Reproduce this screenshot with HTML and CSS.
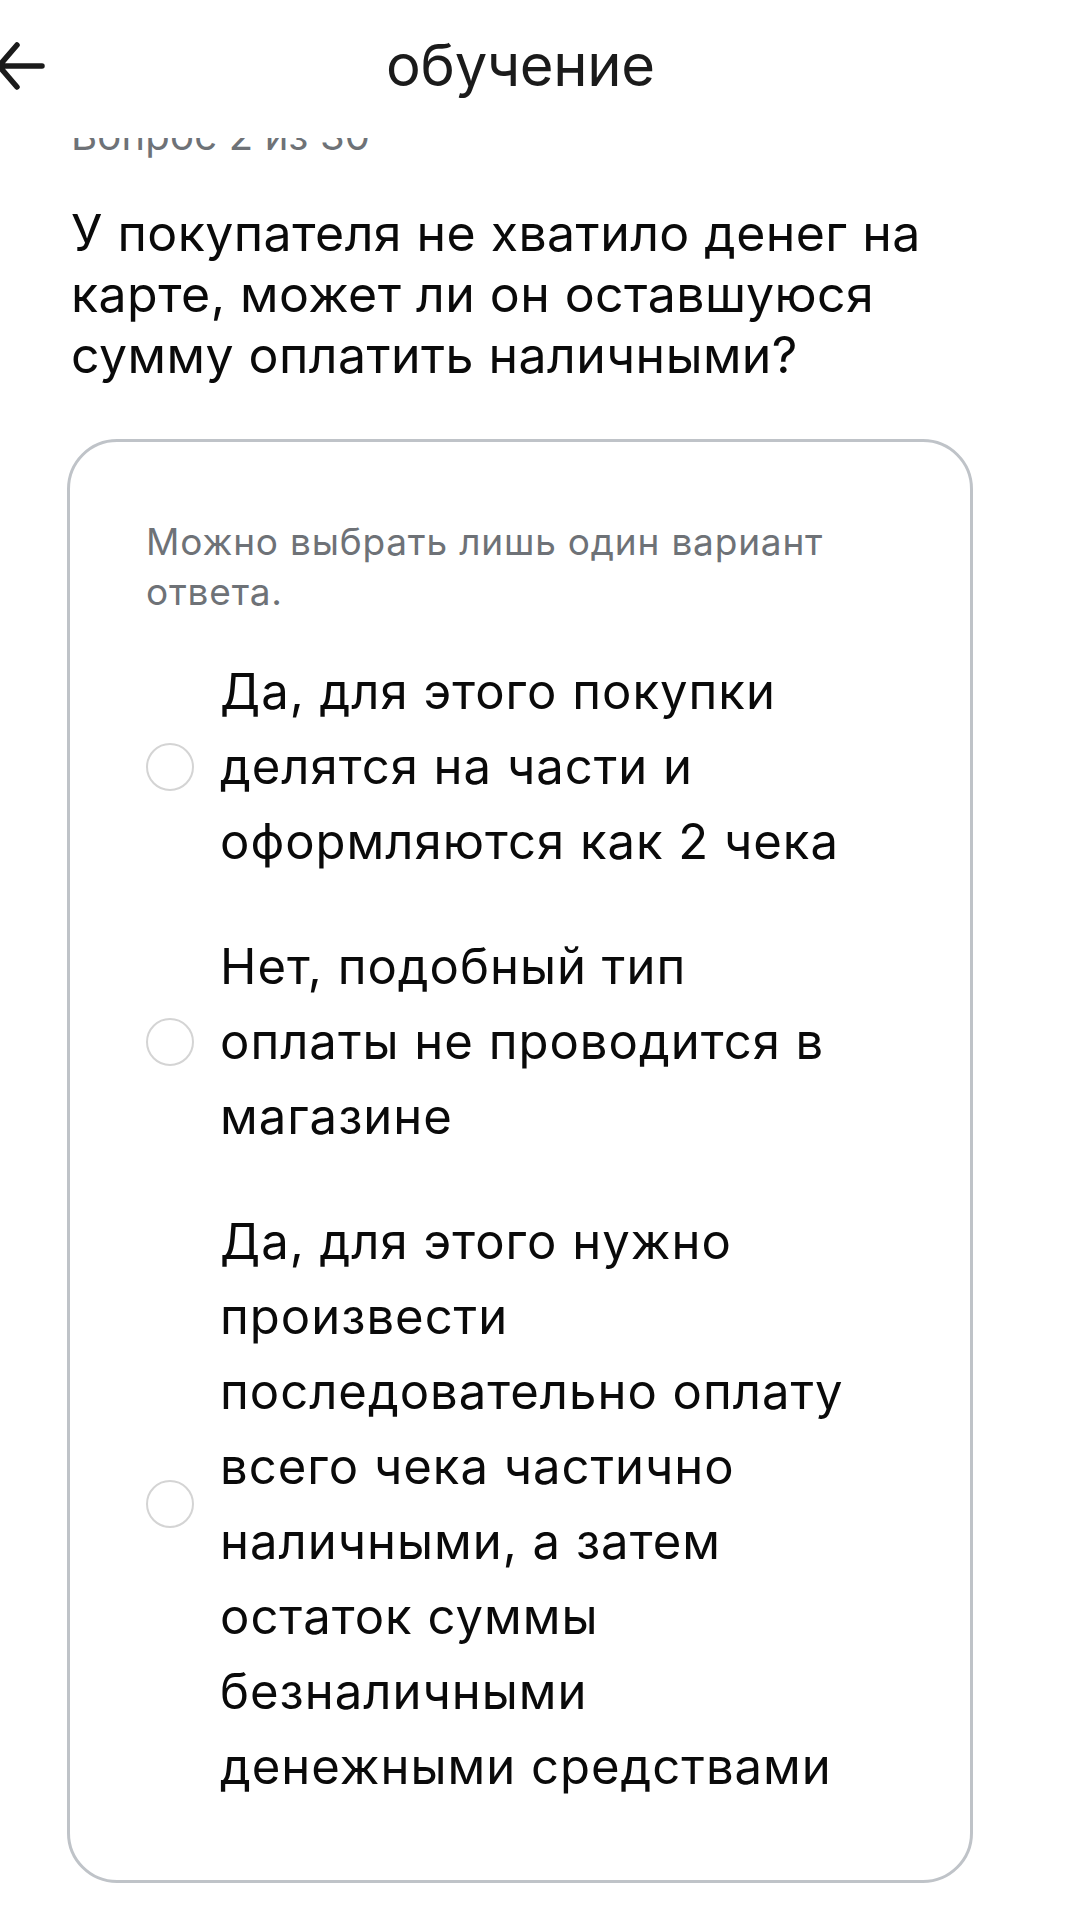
FILE: index.html
```html
<!DOCTYPE html>
<html lang="ru">
<head>
<meta charset="utf-8">
<title>обучение</title>
<link rel="stylesheet" href="styles.css">
</head>
<body>
<header class="topbar">
  <button class="back" aria-label="Назад">
    <svg width="56" height="60" viewBox="0 0 56 60" aria-hidden="true">
      <path d="M42 30 H0 M17 9 L-1 30 L17 51" fill="none" stroke="#1b1b1b" stroke-width="5.5" stroke-linecap="round" stroke-linejoin="round"/>
    </svg>
  </button>
  <h1 class="title">обучение</h1>
  <span class="spacer"></span>
</header>

<main class="content">
  <p class="counter">Вопрос 2 из 30</p>
  <h2 class="question">У покупателя не хватило денег на карте, может ли он оставшуюся сумму оплатить наличными?</h2>

  <section class="card">
    <p class="hint">Можно выбрать лишь один вариант ответа.</p>
    <ul class="options">
      <li class="option">
        <span class="radio"></span>
        <span class="option-text">Да, для этого покупки делятся на части и оформляются как 2 чека</span>
      </li>
      <li class="option">
        <span class="radio"></span>
        <span class="option-text">Нет, подобный тип оплаты не проводится в магазине</span>
      </li>
      <li class="option">
        <span class="radio"></span>
        <span class="option-text">Да, для этого нужно произвести последовательно оплату всего чека частично наличными, а затем остаток суммы безналичными денежными средствами</span>
      </li>
    </ul>
  </section>
</main>
</body>
</html>
```

FILE: styles.css
```css
* {
  box-sizing: border-box;
}

html, body {
  margin: 0;
  padding: 0;
  background: #ffffff;
}

body {
  font-family: "Inter", "Noto Sans", "DejaVu Sans", sans-serif;
  color: #111111;
  width: 1091px;
  height: 1920px;
  overflow: hidden;
}

.topbar {
  position: fixed;
  top: 0;
  left: 0;
  right: 0;
  height: 138px;
  background: #ffffff;
  display: grid;
  grid-template-columns: 60px 1fr 110px;
  align-items: start;
  z-index: 10;
}

.back {
  margin: 36px 0 0 0;
  padding: 0;
  border: 0;
  background: transparent;
  width: 56px;
  height: 60px;
  display: block;
}

.back svg {
  display: block;
}

.title {
  margin: 0;
  padding-top: 30px;
  font-size: 58px;
  line-height: 70px;
  font-weight: 400;
  text-align: center;
  color: #1b1b1b;
  letter-spacing: -0.3px;
}

.content {
  padding: 113px 0 0 67px;
}

.counter {
  margin: 0;
  padding-left: 4px;
  font-size: 40px;
  line-height: 46px;
  color: #6e7277;
  letter-spacing: 0.2px;
}

.question {
  margin: 44px 0 0 0;
  padding-left: 4px;
  width: 900px;
  font-size: 50px;
  line-height: 61px;
  font-weight: 400;
  color: #0a0a0a;
  letter-spacing: 0.45px;
}

.card {
  margin-top: 53px;
  width: 906px;
  border: 3px solid #bfc3c8;
  border-radius: 50px;
  padding: 75px 80px 76px 76px;
}

.hint {
  margin: 0;
  font-size: 37px;
  line-height: 50px;
  color: #6e7277;
  letter-spacing: 0.8px;
}

.options {
  list-style: none;
  margin: 37px 0 0 0;
  padding: 0;
  display: flex;
  flex-direction: column;
  gap: 50px;
}

.option {
  display: flex;
  align-items: center;
  gap: 26px;
}

.radio {
  flex: 0 0 auto;
  width: 48px;
  height: 48px;
  border: 2.5px solid #d4d4d4;
  border-radius: 50%;
}

.option-text {
  width: 660px;
  font-size: 49px;
  line-height: 75px;
  color: #0a0a0a;
  letter-spacing: 1px;
}
```
